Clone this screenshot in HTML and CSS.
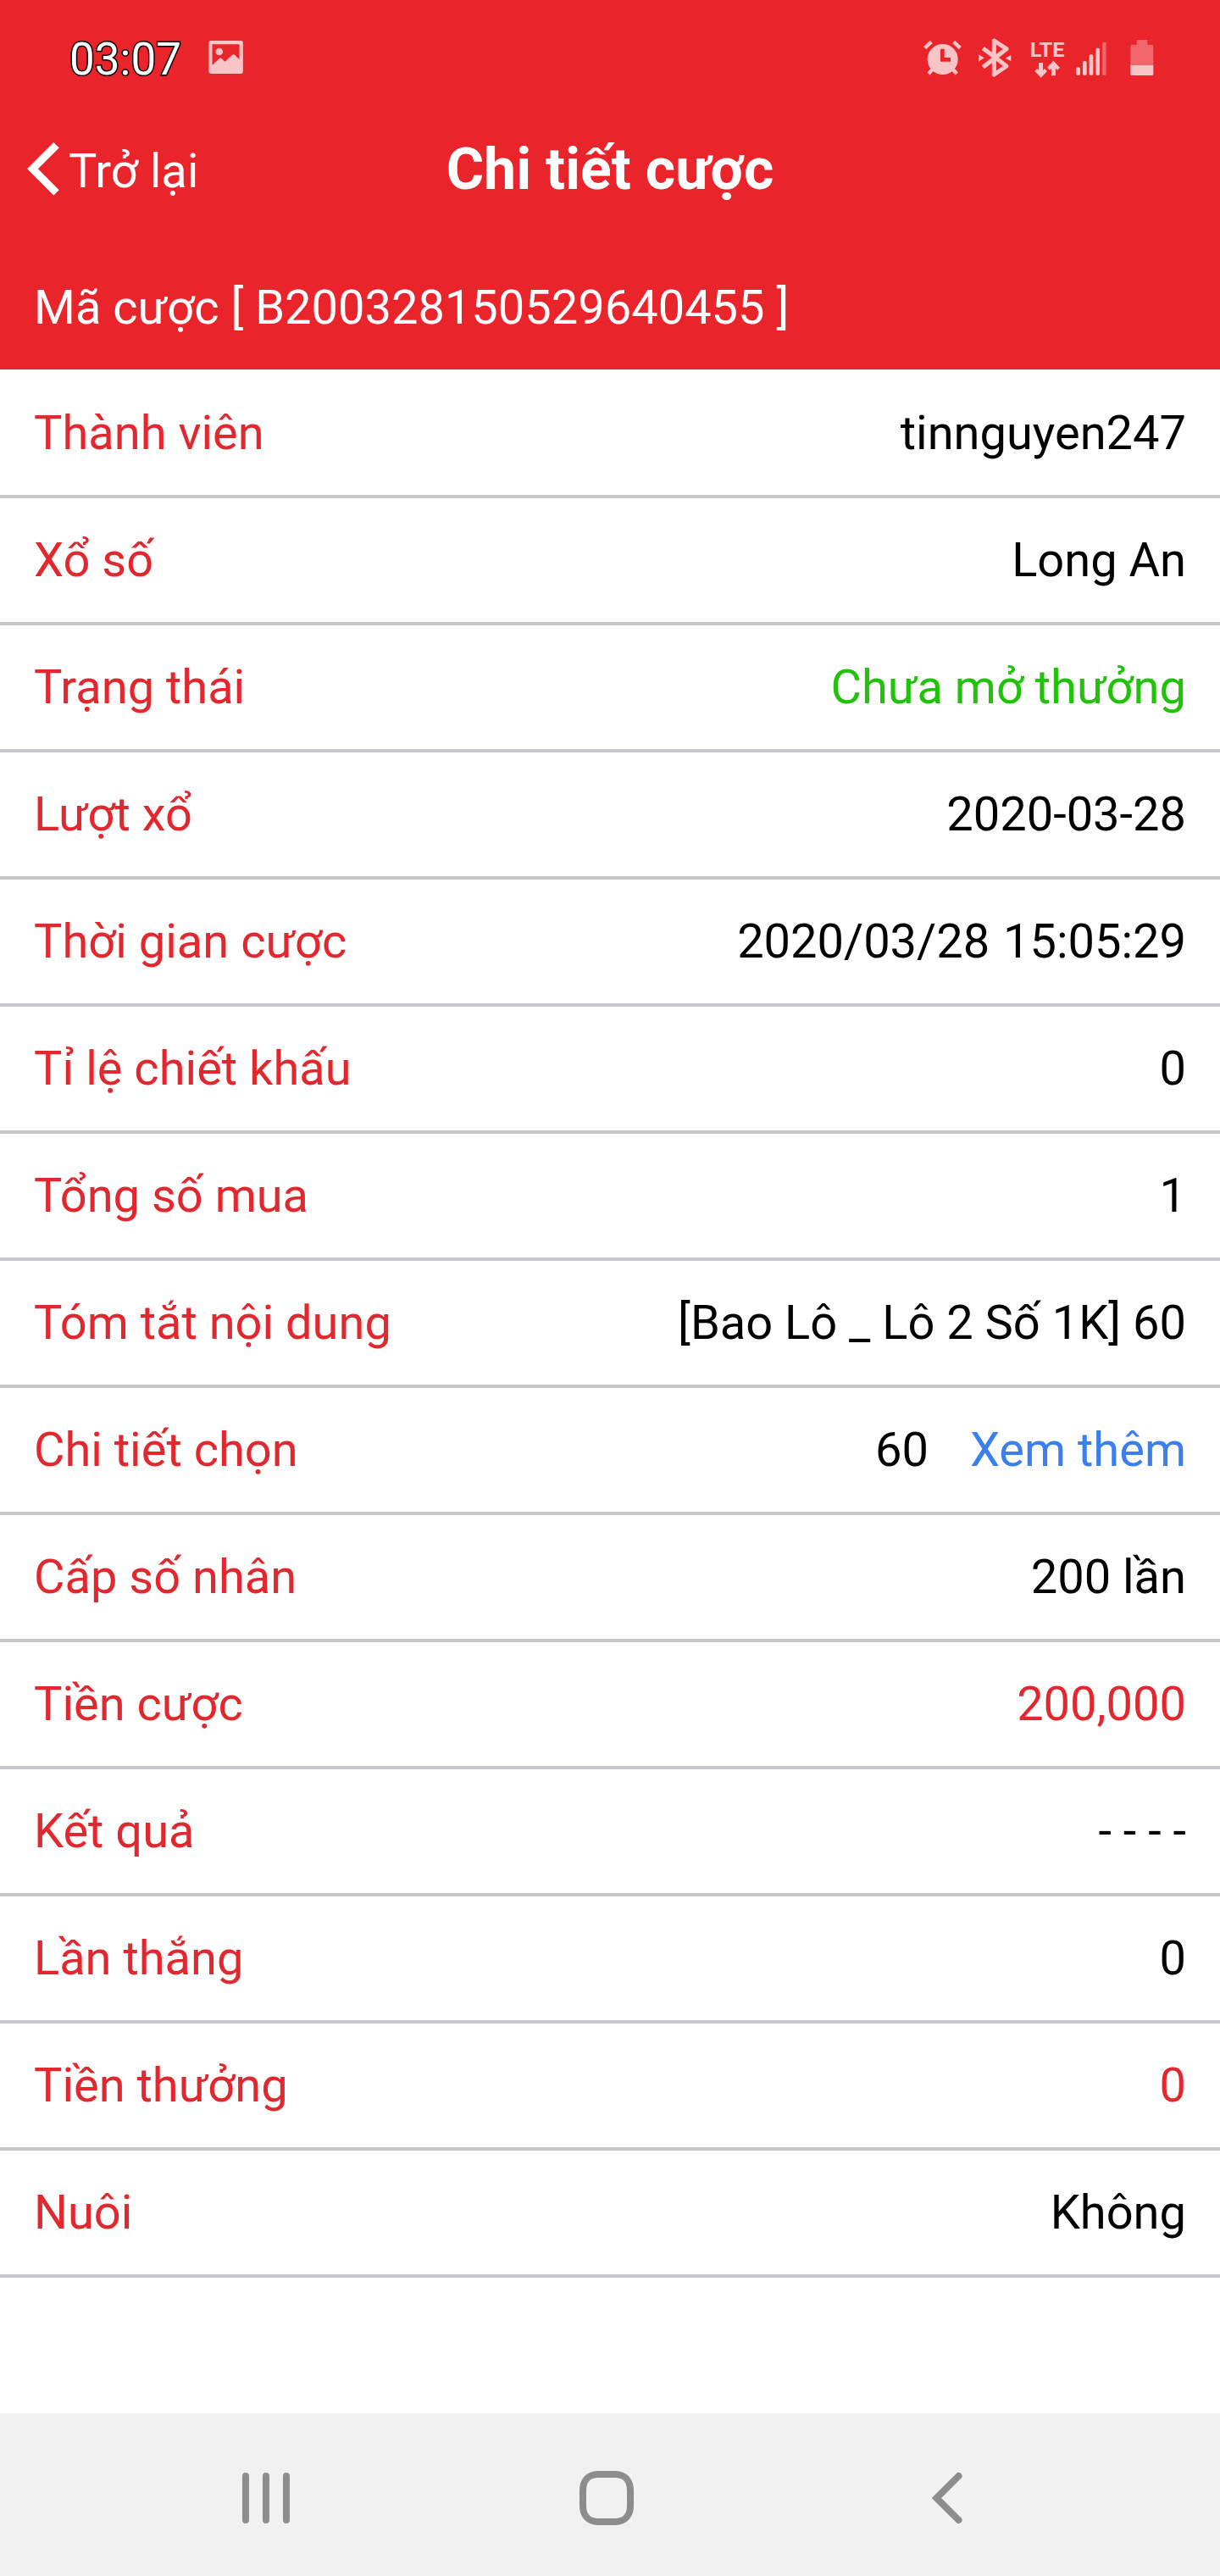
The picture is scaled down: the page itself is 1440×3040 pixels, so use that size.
FILE: index.html
```html
<!DOCTYPE html>
<html lang="vi">
<head>
    <meta charset="UTF-8">
    <meta name="viewport" content="width=device-width, initial-scale=1.0">
    <title>Chi tiết cược</title>
    <link rel="stylesheet" href="styles.css">
</head>
<body>

    <!-- Header -->
    <div class="header">
        <div class="status-bar">
            <span class="time">03:07</span>
            <svg class="icon-picture" viewBox="0 0 122 144" width="41" height="48">
                <path fill-rule="evenodd" d="M8 12h106q8 0 8 8v100q0 9-8 9H9q-8 0-8-9V20q0-8 7-8zM13 25v74l26-25q3-2 6 0l13 12 25-23q5-4 10 0l16 15V25z"/>
                <circle cx="38" cy="51" r="13"/>
            </svg>
            <div class="status-icons">
                <svg class="icon-alarm" viewBox="87 72 141 144" width="47" height="48">
                    <circle cx="158" cy="150" r="54"/>
                    <path class="line" d="M95 110l23-22M197 88l23 22M121 187l-13 14M195 187l13 14" stroke-width="13"/>
                    <path class="cut" d="M150 113h14v31h22v14h-36z"/>
                </svg>
                <svg class="icon-bluetooth" viewBox="282 72 120 144" width="40" height="48">
                    <path class="line" d="M301 111l83 63-44 30V84l44 29-83 65" stroke-width="15" stroke-linejoin="round"/>
                    <path d="M285 133l20 12-20 13zM400 135l-20 11 20 11z"/>
                </svg>
                <svg class="icon-lte" viewBox="468 72 123 144" width="41" height="48">
                    <text x="467" y="140" textLength="123" lengthAdjust="spacingAndGlyphs">LTE</text>
                    <path d="M498 162h15v27l6-6 9 9-22 23-22-23 9-9 5 6zM550 155l23 24-9 9-6-6v26h-15v-26l-6 6-9-9z"/>
                </svg>
                <svg class="icon-signal" viewBox="630 72 108 144" width="36" height="48">
                    <rect x="631" y="178" width="14" height="29" rx="6"/>
                    <rect x="654" y="156" width="14" height="51" rx="6"/>
                    <rect x="677" y="133" width="14" height="74" rx="6"/>
                    <rect x="700" y="110" width="14" height="97" rx="6"/>
                    <rect class="dim" x="723" y="89" width="14" height="118" rx="6"/>
                </svg>
                <svg class="icon-battery" viewBox="821 72 84 144" width="28" height="48">
                    <path class="dim" d="M844 85q0-4 4-4h30q4 0 4 4v14h16q5 0 5 5v67h-81v-67q0-5 5-5h17z"/>
                    <path d="M822 171h81v31q0 5-5 5h-71q-5 0-5-5z"/>
                </svg>
            </div>
        </div>
        <div class="navbar">
            <a class="back">
                <svg viewBox="0 0 40 64" width="40" height="64">
                    <path d="M34.5 3.2L6.4 31.3l28.1 28.1"/>
                </svg>
                <span>Trở lại</span>
            </a>
            <h1>Chi tiết cược</h1>
        </div>
        <div class="bet-code">Mã cược [ B200328150529640455 ]</div>
    </div>

    <!-- Bet details -->
    <ul class="detail-list">
        <li><span class="label">Thành viên</span><span>tinnguyen247</span></li>
        <li><span class="label">Xổ số</span><span>Long An</span></li>
        <li><span class="label">Trạng thái</span><span class="pending">Chưa mở thưởng</span></li>
        <li><span class="label">Lượt xổ</span><span>2020-03-28</span></li>
        <li><span class="label">Thời gian cược</span><span>2020/03/28 <span class="clock">15:05:29</span></span></li>
        <li><span class="label">Tỉ lệ chiết khấu</span><span>0</span></li>
        <li><span class="label">Tổng số mua</span><span>1</span></li>
        <li><span class="label">Tóm tắt nội dung</span><span>[Bao Lô _ Lô 2 Số 1K] 60</span></li>
        <li><span class="label">Chi tiết chọn</span><span>60<a class="more">Xem thêm</a></span></li>
        <li><span class="label">Cấp số nhân</span><span>200 lần</span></li>
        <li><span class="label">Tiền cược</span><span class="money">200,000</span></li>
        <li><span class="label">Kết quả</span><span>- - - -</span></li>
        <li><span class="label">Lần thắng</span><span>0</span></li>
        <li><span class="label">Tiền thưởng</span><span class="money">0</span></li>
        <li><span class="label">Nuôi</span><span>Không</span></li>
    </ul>

    <!-- Android navigation bar -->
    <div class="bottom-nav">
        <svg class="nav-recent" viewBox="0 0 56 64" width="56" height="64">
            <path d="M4 6v52M28 6v52M52 6v52"/>
        </svg>
        <svg class="nav-home" viewBox="0 0 64 64" width="64" height="64">
            <path d="M22 4h20C54 4 60 12 60 23v18C60 52 54 60 42 60H22C10 60 4 52 4 41V23C4 12 10 4 22 4z"/>
        </svg>
        <svg class="nav-back" viewBox="0 0 36 64" width="36" height="64">
            <path d="M31.5 6L5.5 32l26 26"/>
        </svg>
    </div>

</body>
</html>
```
FILE: styles.css
```css
* {
    box-sizing: border-box;
    margin: 0;
    padding: 0;
}
body {
    font-family: Roboto, "Noto Sans", sans-serif;
    font-size: 56px;
    color: #000;
    background-color: #fefefe;
    height: 3040px;
    display: flex;
    flex-direction: column;
}

/* Header */
.header {
    background-color: #e9252b;
    color: white;
    height: 436px;
}
.status-bar {
    height: 136px;
    display: flex;
    align-items: center;
    padding: 0 78px 0 82px;
    fill: #f9c4c6;
}
.time {
    width: 164px;
    padding-top: 3px;
    font-size: 53px;
    -webkit-text-stroke: 3px #000;
    paint-order: stroke fill;
}
.status-icons {
    display: flex;
    margin-left: auto;
}
.status-icons .line {
    fill: none;
    stroke: #f9c4c6;
}
.status-icons .cut {
    fill: #e9252b;
}
.status-icons .dim {
    fill: #f0666b;
}
.icon-bluetooth {
    margin-left: 18px;
}
.icon-lte {
    margin-left: 22px;
    font-size: 74px;
    font-weight: bold;
}
.icon-signal {
    margin-left: 13px;
}
.icon-battery {
    margin-left: 28px;
}
.navbar {
    height: 128px;
    display: grid;
    grid-template-columns: 1fr auto 1fr;
    align-items: center;
    padding: 0 32px;
}
.navbar h1 {
    font-size: 68px;
    font-weight: bold;
}
.back {
    display: flex;
    align-items: center;
    gap: 9px;
}
.back span {
    padding-top: 4px;
}
.back svg {
    fill: none;
    stroke: white;
    stroke-width: 9;
}
.bet-code {
    height: 172px;
    padding: 66px 40px 0;
}

/* Bet details */
.detail-list {
    list-style-type: none;
    padding-top: 2px;
    flex-grow: 1;
}
.detail-list li {
    height: 150px;
    display: flex;
    justify-content: space-between;
    align-items: center;
    padding: 0 40px;
    border-bottom: 4px solid #c7c6cb;
}
.label,
.money {
    color: #e0282e;
}
.pending {
    color: #20c30a;
}
.clock {
    margin-left: 2px;
}
.more {
    color: #3b7fee;
    margin-left: 49px;
}

/* Bottom navigation */
.bottom-nav {
    height: 192px;
    display: flex;
    align-items: center;
    padding: 8px 0 0 286px;
    background-color: #f1f1f1;
    fill: none;
    stroke: #8d8d8d;
    stroke-width: 8;
    stroke-linecap: round;
}
.nav-home {
    margin-left: 342px;
}
.nav-back {
    margin-left: 352px;
}
```
